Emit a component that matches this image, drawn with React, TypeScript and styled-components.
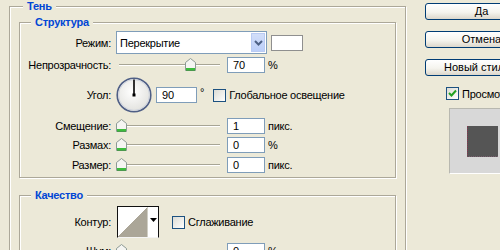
import React from "react";
import styled, { createGlobalStyle } from "styled-components";

const GlobalStyle = createGlobalStyle`
  html, body {
    margin: 0;
    padding: 0;
    background: #ece9d8;
    overflow: hidden;
  }
  body {
    font-family: "Liberation Sans", Arial, sans-serif;
    font-size: 11px;
    letter-spacing: -0.25px;
    color: #000;
  }
`;

const Page = styled.div`
  display: flex;
  align-items: flex-start;
  width: 500px;
  height: 250px;
  overflow: hidden;
`;

const Main = styled.div`
  flex: none;
  width: 397px;
  margin-left: 9px;
`;

const Group = styled.fieldset<{ $outer?: boolean; $gap?: number }>`
  margin: ${(p) => p.$gap || 0}px 0 0;
  min-width: 0;
  border: 1px solid #aca899;
  box-shadow: 1px 1px 0 #fff, inset 1px 1px 0 #fff;
  padding: ${(p) => (p.$outer ? "3px 9px 30px" : "2px 0 4px")};
`;

const Legend = styled.legend<{ $inset: number }>`
  margin-left: ${(p) => p.$inset}px;
  padding: 0 4px;
  background: #ece9d8;
  color: #0046d5;
  font-weight: bold;
  font-size: 11px;
  line-height: 13px;
`;

const Row = styled.div<{ $h: number; $mt: number }>`
  display: flex;
  align-items: center;
  height: ${(p) => p.$h}px;
  margin-top: ${(p) => p.$mt}px;
  white-space: nowrap;
`;

const Label = styled.span`
  flex: none;
  width: 91px;
  margin-right: 5px;
  text-align: right;
`;

const Select = styled.div`
  flex: none;
  display: flex;
  box-sizing: border-box;
  width: 151px;
  height: 23px;
  padding: 1px;
  border: 1px solid #7f9db9;
  background: #fff;
`;

const SelectText = styled.span`
  flex: 1;
  padding-left: 2px;
  line-height: 21px;
`;

const SelectArrow = styled.span`
  flex: none;
  display: flex;
  align-items: center;
  justify-content: center;
  box-sizing: border-box;
  width: 14px;
  border: 1px solid #b9cbf3;
  background: linear-gradient(180deg, #d2def9 0%, #bccff9 100%);
`;

const Swatch = styled.span`
  flex: none;
  box-sizing: border-box;
  width: 32px;
  height: 16px;
  margin-left: 4px;
  border: 1px solid #8f8f8f;
  background: #fff;
`;

const SliderBox = styled.div`
  position: relative;
  flex: none;
  width: 105px;
  height: 16px;
  margin-right: 6px;
`;

const Track = styled.div`
  position: absolute;
  left: 3px;
  right: 1px;
  top: 7px;
  height: 1px;
  background: #a7a595;
  border-bottom: 1px solid #fff;
`;

const Thumb = styled.svg`
  position: absolute;
  top: 1px;
  width: 11px;
  height: 13px;
`;

const Field = styled.input<{ $w: number }>`
  flex: none;
  box-sizing: border-box;
  width: ${(p) => p.$w}px;
  height: 16px;
  margin: 0;
  padding: 0 0 0 5px;
  border: 1px solid #7f9db9;
  background: #fff;
  color: #000;
  font: inherit;
  outline: none;
`;

const Unit = styled.span`
  margin-left: 3px;
`;

const Degree = styled.span`
  align-self: flex-start;
  margin: 9px 9px 0 3px;
  font-size: 11px;
`;

const CheckBox = styled.span`
  flex: none;
  display: inline-flex;
  align-items: center;
  justify-content: center;
  box-sizing: border-box;
  width: 13px;
  height: 13px;
  border: 1px solid #1c5180;
  background: linear-gradient(135deg, #dcdcd5 0%, #f4f4f1 70%, #fff 100%);
`;

const CheckLabel = styled.span`
  margin-left: 3px;
`;

const Contour = styled.div`
  flex: none;
  display: flex;
  box-sizing: border-box;
  width: 42px;
  height: 32px;
  margin-left: 1px;
  margin-right: 13px;
  border: 1px solid #111;
  border-bottom-color: #f4f4f4;
  background: #fff;
`;

const ContourGraph = styled.svg`
  flex: none;
  width: 29px;
  height: 30px;
  border-right: 1px solid #d0cec4;
`;

const ContourArrow = styled.span`
  flex: 1;
  display: flex;
  justify-content: center;
  padding-top: 11px;
`;

const Side = styled.div`
  flex: none;
  display: flex;
  flex-direction: column;
  align-items: flex-start;
  width: 120px;
  margin-left: 19px;
  padding-top: 3px;
`;

const Button = styled.button<{ $first?: boolean }>`
  flex: none;
  width: 113px;
  height: 17px;
  margin: ${(p) => (p.$first ? 0 : 11)}px 0 0;
  padding: 0 0 1px;
  border: 1px solid #003c74;
  border-radius: 3px;
  background: linear-gradient(180deg, #ffffff 0%, #f5f4ee 55%, #dcd7cb 100%);
  color: #000;
  font: inherit;
  line-height: 14px;
  white-space: nowrap;
`;

const PreviewToggle = styled.div`
  display: flex;
  align-items: center;
  margin: 11px 0 0 21px;
  white-space: nowrap;
`;

const Preview = styled.div`
  flex: none;
  display: flex;
  align-items: center;
  justify-content: center;
  box-sizing: border-box;
  width: 65px;
  height: 66px;
  margin: 8px 0 0 24px;
  border-top: 1px solid #b8b8b0;
  border-left: 1px solid #b8b8b0;
  border-bottom: 1px solid #fff;
  background: #d8d8d8;
`;

const PreviewSquare = styled.div`
  box-sizing: border-box;
  width: 31px;
  height: 31px;
  background: #555555;
  border-left: 1px dotted #8a3a52;
  border-bottom: 1px dotted #7a6070;
`;

function Slider({ value }: { value: number }) {
  return (
    <SliderBox>
      <Track />
      <Thumb style={{ left: Math.round(value * 0.985) }} viewBox="0 0 11 13">
        <path
          d="M0.5 4.5 L5.5 0.5 L10.5 4.5 L10.5 12.5 L0.5 12.5 Z"
          fill="#f5f5f2"
          stroke="#8c9a94"
        />
        <rect x="1" y="10" width="9" height="2" fill="#3cbc3c" />
        <rect x="1" y="12" width="9" height="0.6" fill="#1e9a1e" />
      </Thumb>
    </SliderBox>
  );
}

function Check({ on }: { on?: boolean }) {
  return (
    <CheckBox>
      {on && (
        <svg width="9" height="9" viewBox="0 0 9 9">
          <path d="M1 4 L3.5 6.5 L8 1.5" fill="none" stroke="#21a121" strokeWidth="2" />
        </svg>
      )}
    </CheckBox>
  );
}

function Dial() {
  return (
    <svg width="36" height="36" viewBox="0 0 36 36" style={{ flex: "none" }}>
      <defs>
        <radialGradient id="dialFill" cx="45%" cy="40%" r="60%">
          <stop offset="0%" stopColor="#ffffff" />
          <stop offset="100%" stopColor="#e2e2de" />
        </radialGradient>
      </defs>
      <circle cx="18" cy="18" r="16.8" fill="url(#dialFill)" stroke="#4f5f86" strokeWidth="1.6" />
      <circle cx="18" cy="18" r="15.4" fill="none" stroke="#c9cfdc" strokeWidth="0.8" />
      <line x1="18" y1="18" x2="18" y2="2.5" stroke="#000" strokeWidth="1.6" />
      <rect x="16.5" y="16.5" width="3" height="3" fill="#000" />
    </svg>
  );
}

export default function App() {
  return (
    <>
      <GlobalStyle />
      <Page>
        <Main>
          <Group $outer>
            <Legend $inset={4}>Тень</Legend>
            <Group>
              <Legend $inset={11}>Структура</Legend>
              <Row $h={23} $mt={0}>
                <Label>Режим:</Label>
                <Select>
                  <SelectText>Перекрытие</SelectText>
                  <SelectArrow>
                    <svg width="9" height="6" viewBox="0 0 9 6">
                      <path d="M1 1 L4.5 4.5 L8 1" fill="none" stroke="#4d6185" strokeWidth="2" />
                    </svg>
                  </SelectArrow>
                </Select>
                <Swatch />
              </Row>
              <Row $h={16} $mt={3}>
                <Label>Непрозрачность:</Label>
                <Slider value={70} />
                <Field $w={38} defaultValue="70" />
                <Unit>%</Unit>
              </Row>
              <Row $h={36} $mt={4}>
                <Label>Угол:</Label>
                <Dial />
                <Field $w={41} defaultValue="90" style={{ marginLeft: 4 }} />
                <Degree>°</Degree>
                <Check />
                <CheckLabel>Глобальное освещение</CheckLabel>
              </Row>
              <Row $h={16} $mt={5}>
                <Label>Смещение:</Label>
                <Slider value={0} />
                <Field $w={38} defaultValue="1" />
                <Unit>пикс.</Unit>
              </Row>
              <Row $h={16} $mt={3}>
                <Label>Размах:</Label>
                <Slider value={0} />
                <Field $w={38} defaultValue="0" />
                <Unit>%</Unit>
              </Row>
              <Row $h={16} $mt={4}>
                <Label>Размер:</Label>
                <Slider value={0} />
                <Field $w={38} defaultValue="0" />
                <Unit>пикс.</Unit>
              </Row>
            </Group>
            <Group $gap={11}>
              <Legend $inset={11}>Качество</Legend>
              <Row $h={32} $mt={2}>
                <Label>Контур:</Label>
                <Contour>
                  <ContourGraph viewBox="0 0 29 30" shapeRendering="crispEdges">
                    <polygon points="0,30 29,0 29,30" fill="#aba698" />
                  </ContourGraph>
                  <ContourArrow>
                    <svg width="7" height="4" viewBox="0 0 7 4">
                      <path d="M0 0 H7 L3.5 4 Z" fill="#000" />
                    </svg>
                  </ContourArrow>
                </Contour>
                <Check />
                <CheckLabel>Сглаживание</CheckLabel>
              </Row>
              <Row $h={16} $mt={5}>
                <Label>Шум:</Label>
                <Slider value={0} />
                <Field $w={38} defaultValue="0" />
                <Unit>%</Unit>
              </Row>
            </Group>
          </Group>
        </Main>
        <Side>
          <Button $first>Да</Button>
          <Button>Отмена</Button>
          <Button>Новый стиль...</Button>
          <PreviewToggle>
            <Check on />
            <CheckLabel>Просмотр</CheckLabel>
          </PreviewToggle>
          <Preview>
            <PreviewSquare />
          </Preview>
        </Side>
      </Page>
    </>
  );
}
